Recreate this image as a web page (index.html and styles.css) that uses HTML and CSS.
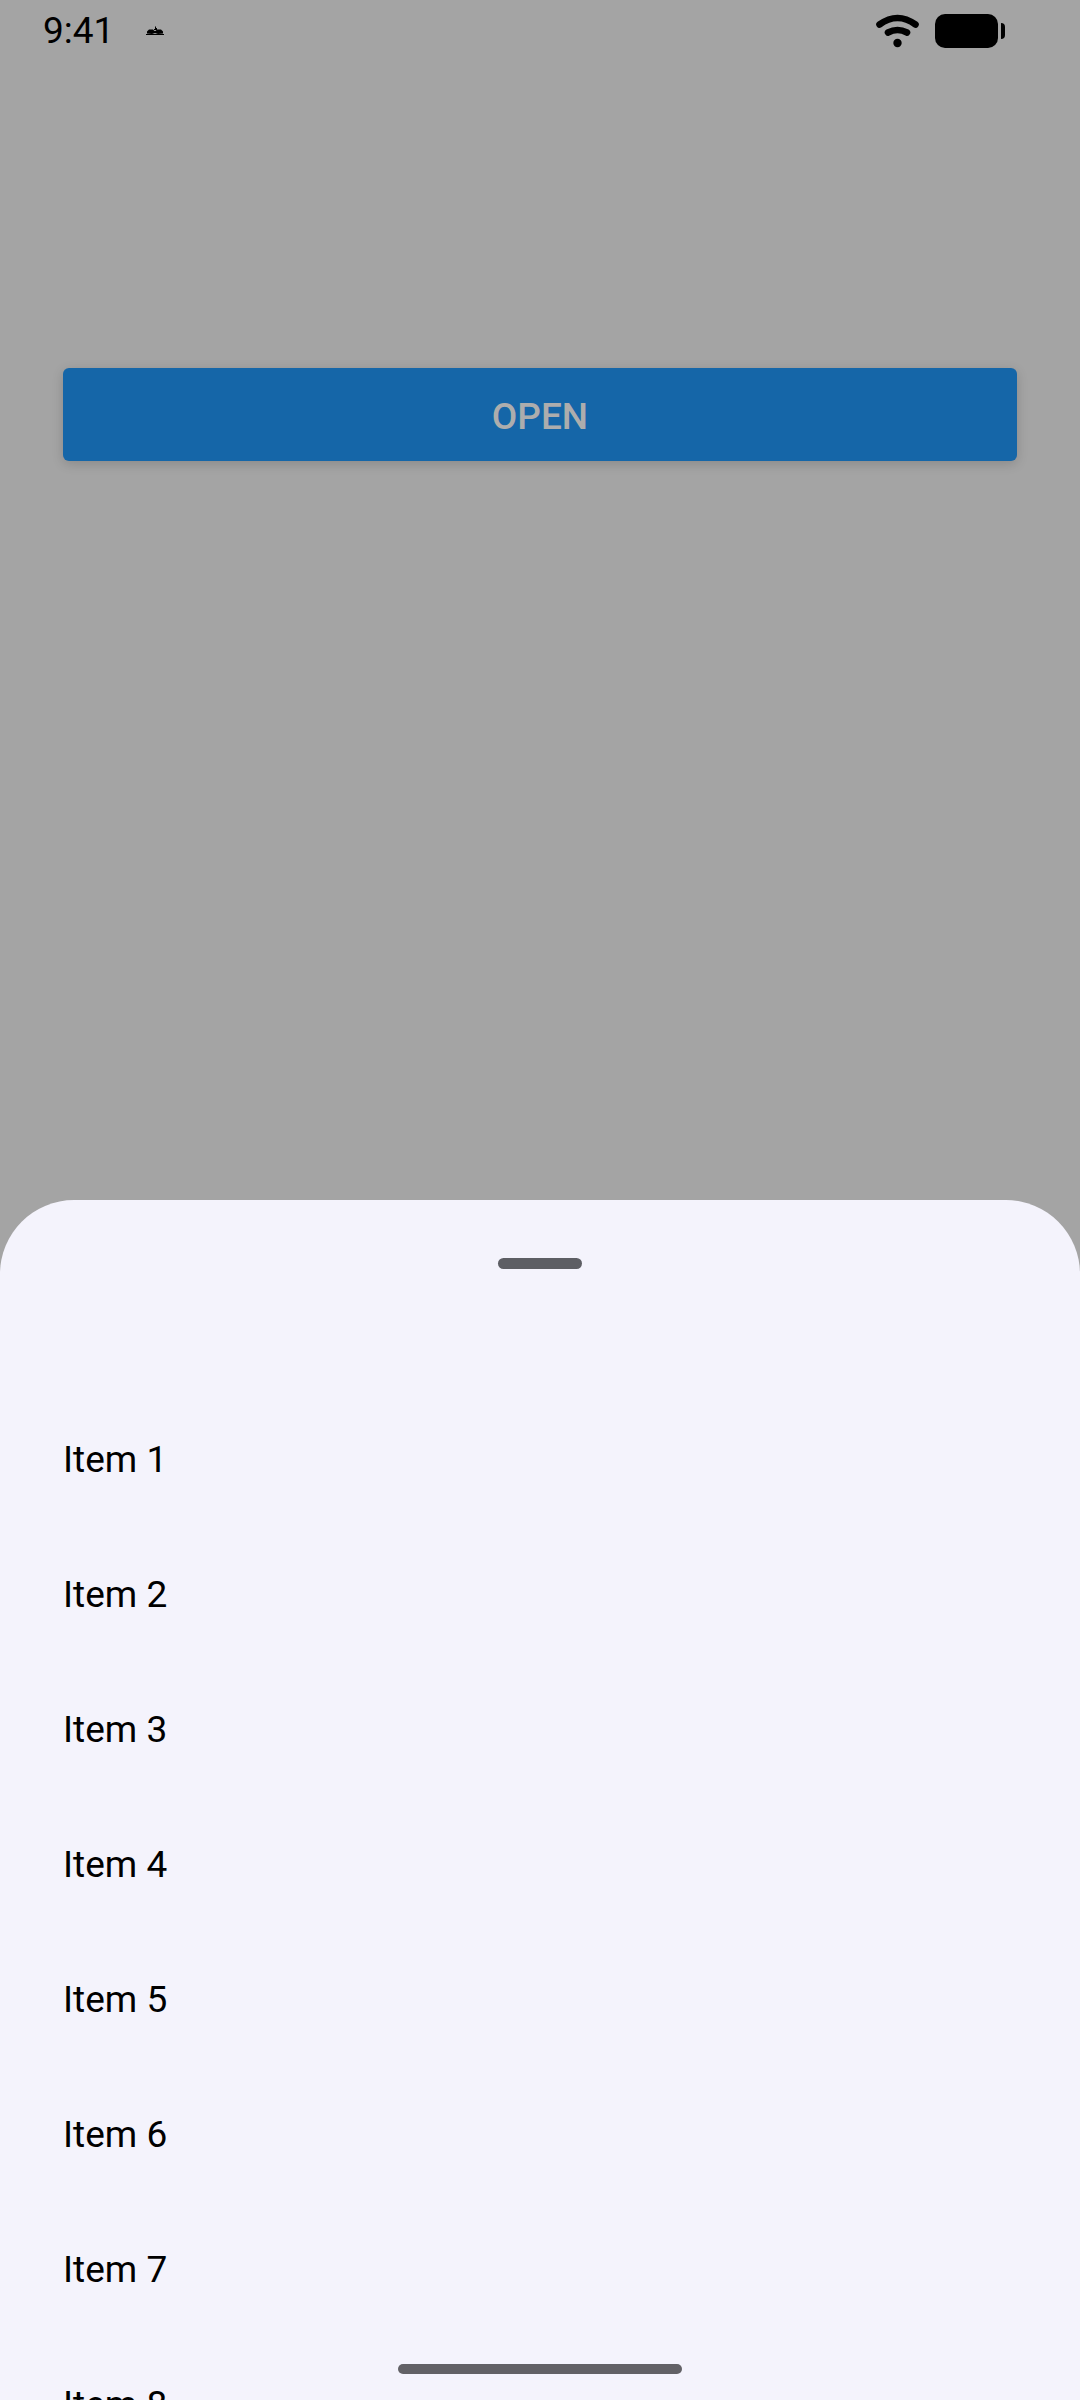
FILE: index.html
```html
<!DOCTYPE html>
<html lang="en">
<head>
<meta charset="utf-8">
<meta name="viewport" content="width=device-width, initial-scale=1">
<title>Bottom sheet</title>
<link rel="stylesheet" href="styles.css">
</head>
<body>
<div class="screen">
  <div class="backdrop">
    <header class="status">
      <span class="time">9:41</span>
      <svg class="notice" viewBox="0 0 18 10" aria-hidden="true">
        <path d="M0 8h18v1H0zM1 7.500V5.500L3 3.500h4l1.500 1.500h1L11 3.500h4l2 2v2l-5 .5-3-1-3 1zM9 0l1 1v1h1v2H8V3h1z"/>
      </svg>
      <span class="spacer"></span>
      <svg class="wifi" viewBox="0 0 44 34" aria-hidden="true">
        <path d="M3.500 10.500Q21.500 -2.500 39.500 10.500M12 18.500Q21.500 13.500 31 18.500" fill="none" stroke="#000" stroke-width="6.600" stroke-linecap="round"/>
        <circle cx="21.500" cy="29" r="4.200"/>
      </svg>
      <svg class="battery" viewBox="0 0 70 34" aria-hidden="true">
        <rect width="63" height="34" rx="10"/>
        <path d="M66 9q4 0 4 4v8q0 4-4 4z"/>
      </svg>
    </header>
    <main class="content">
      <button class="open" type="button">OPEN</button>
    </main>
  </div>
  <section class="sheet" aria-label="Items">
    <div class="handle"></div>
    <ul class="items">
      <li class="item">Item 1</li>
      <li class="item">Item 2</li>
      <li class="item">Item 3</li>
      <li class="item">Item 4</li>
      <li class="item">Item 5</li>
      <li class="item">Item 6</li>
      <li class="item">Item 7</li>
      <li class="item">Item 8</li>
    </ul>
  </section>
  <div class="home-bar"></div>
</div>
</body>
</html>
```
FILE: styles.css
```css
* {
  box-sizing: border-box;
}

body {
  margin: 0;
  background: #a4a4a4;
  color: #000;
  font-family: Roboto, sans-serif;
  font-size: 37px;
  line-height: 44px;
}

.screen {
  position: relative;
  display: grid;
  grid-template-rows: 1fr 1fr;
  height: 100vh;
  overflow: hidden;
}

.status {
  display: flex;
  align-items: center;
  height: 62px;
  padding: 0 75px 0 43px;
}

.notice {
  width: 18px;
  height: 10px;
  margin-left: 32px;
}

.spacer {
  flex: 1;
}

.wifi {
  width: 44px;
  height: 34px;
  margin-right: 15px;
}

.battery {
  width: 70px;
  height: 34px;
}

.content {
  padding: 306px 63px 0;
}

.open {
  display: block;
  width: 100%;
  height: 93px;
  padding: 5px 0 0;
  border: 0;
  border-radius: 6px;
  background: #1566a8;
  box-shadow: 0 3px 12px rgba(0, 0, 0, 0.16);
  color: #adadad;
  font: 500 37px/44px Roboto, sans-serif;
}

.sheet {
  min-height: 0;
  overflow: hidden;
  padding-top: 58px;
  border-radius: 74px 74px 0 0;
  background: #f4f3fc;
}

.handle {
  width: 84px;
  height: 11px;
  margin: 0 auto 123px;
  border-radius: 6px;
  background: #5d5e64;
}

.items {
  margin: 0;
  padding: 0;
  list-style: none;
}

.item {
  display: flex;
  align-items: center;
  height: 135px;
  padding: 0 63px;
}

.home-bar {
  position: absolute;
  bottom: 26px;
  left: 50%;
  width: 284px;
  height: 10px;
  margin-left: -142px;
  border-radius: 5px;
  background: #626166;
}
```
